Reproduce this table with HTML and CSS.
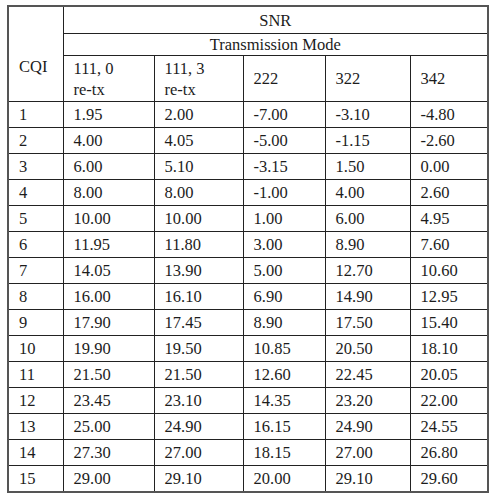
FILE: index.html
```html
<!DOCTYPE html>
<html lang="en">
<head>
    <meta charset="UTF-8">
    <meta name="viewport" content="width=device-width, initial-scale=1.0">
    <title>CQI SNR table</title>
    <link rel="stylesheet" href="styles.css">
</head>
<body>

<table class="snr-table">
    <colgroup>
        <col class="c-cqi">
        <col class="c-1">
        <col class="c-2">
        <col class="c-3">
        <col class="c-4">
        <col class="c-5">
    </colgroup>
    <thead>
        <tr class="row-snr">
            <th class="cqi" rowspan="3">CQI</th>
            <th class="center" colspan="5">SNR</th>
        </tr>
        <tr class="row-mode">
            <th class="center" colspan="5">Transmission Mode</th>
        </tr>
        <tr class="row-head">
            <th>111, 0<br>re-tx</th>
            <th>111, 3<br>re-tx</th>
            <th>222</th>
            <th>322</th>
            <th>342</th>
        </tr>
    </thead>
    <tbody id="rows"></tbody>
</table>

<script>
    // CQI, 111/0, 111/3, 222, 322, 342
    const data = [
        [1, '1.95', '2.00', '-7.00', '-3.10', '-4.80'],
        [2, '4.00', '4.05', '-5.00', '-1.15', '-2.60'],
        [3, '6.00', '5.10', '-3.15', '1.50', '0.00'],
        [4, '8.00', '8.00', '-1.00', '4.00', '2.60'],
        [5, '10.00', '10.00', '1.00', '6.00', '4.95'],
        [6, '11.95', '11.80', '3.00', '8.90', '7.60'],
        [7, '14.05', '13.90', '5.00', '12.70', '10.60'],
        [8, '16.00', '16.10', '6.90', '14.90', '12.95'],
        [9, '17.90', '17.45', '8.90', '17.50', '15.40'],
        [10, '19.90', '19.50', '10.85', '20.50', '18.10'],
        [11, '21.50', '21.50', '12.60', '22.45', '20.05'],
        [12, '23.45', '23.10', '14.35', '23.20', '22.00'],
        [13, '25.00', '24.90', '16.15', '24.90', '24.55'],
        [14, '27.30', '27.00', '18.15', '27.00', '26.80'],
        [15, '29.00', '29.10', '20.00', '29.10', '29.60']
    ];

    const body = document.getElementById('rows');
    data.forEach(row => {
        const tr = document.createElement('tr');
        row.forEach(value => {
            const td = document.createElement('td');
            td.textContent = value;
            tr.appendChild(td);
        });
        body.appendChild(tr);
    });
</script>

</body>
</html>
```

FILE: styles.css
```css
body {
    margin: 5px 0 0 7px;
    background-color: #fff;
    font-family: "Liberation Serif", "Times New Roman", serif;
    font-size: 16.5px;
    color: #1c1c1c;
}

.snr-table {
    border-collapse: collapse;
    table-layout: fixed;
    width: 480px;
    border: 2px solid #555;
}

.c-cqi { width: 55px; }
.c-1 { width: 91px; }
.c-2 { width: 89px; }
.c-3 { width: 82px; }
.c-4 { width: 85px; }
.c-5 { width: 78px; }

th, td {
    border: 1px solid #222;
    padding: 0 0 0 10px;
    text-align: left;
    font-weight: normal;
    vertical-align: middle;
    line-height: 21px;
}

th.center {
    text-align: center;
    padding: 0;
}

th.cqi {
    padding-top: 25px;
}

.row-snr th { height: 26px; }
.row-mode th { height: 21px; }
.row-head th { height: 45px; }

td { height: 25px; }
```
